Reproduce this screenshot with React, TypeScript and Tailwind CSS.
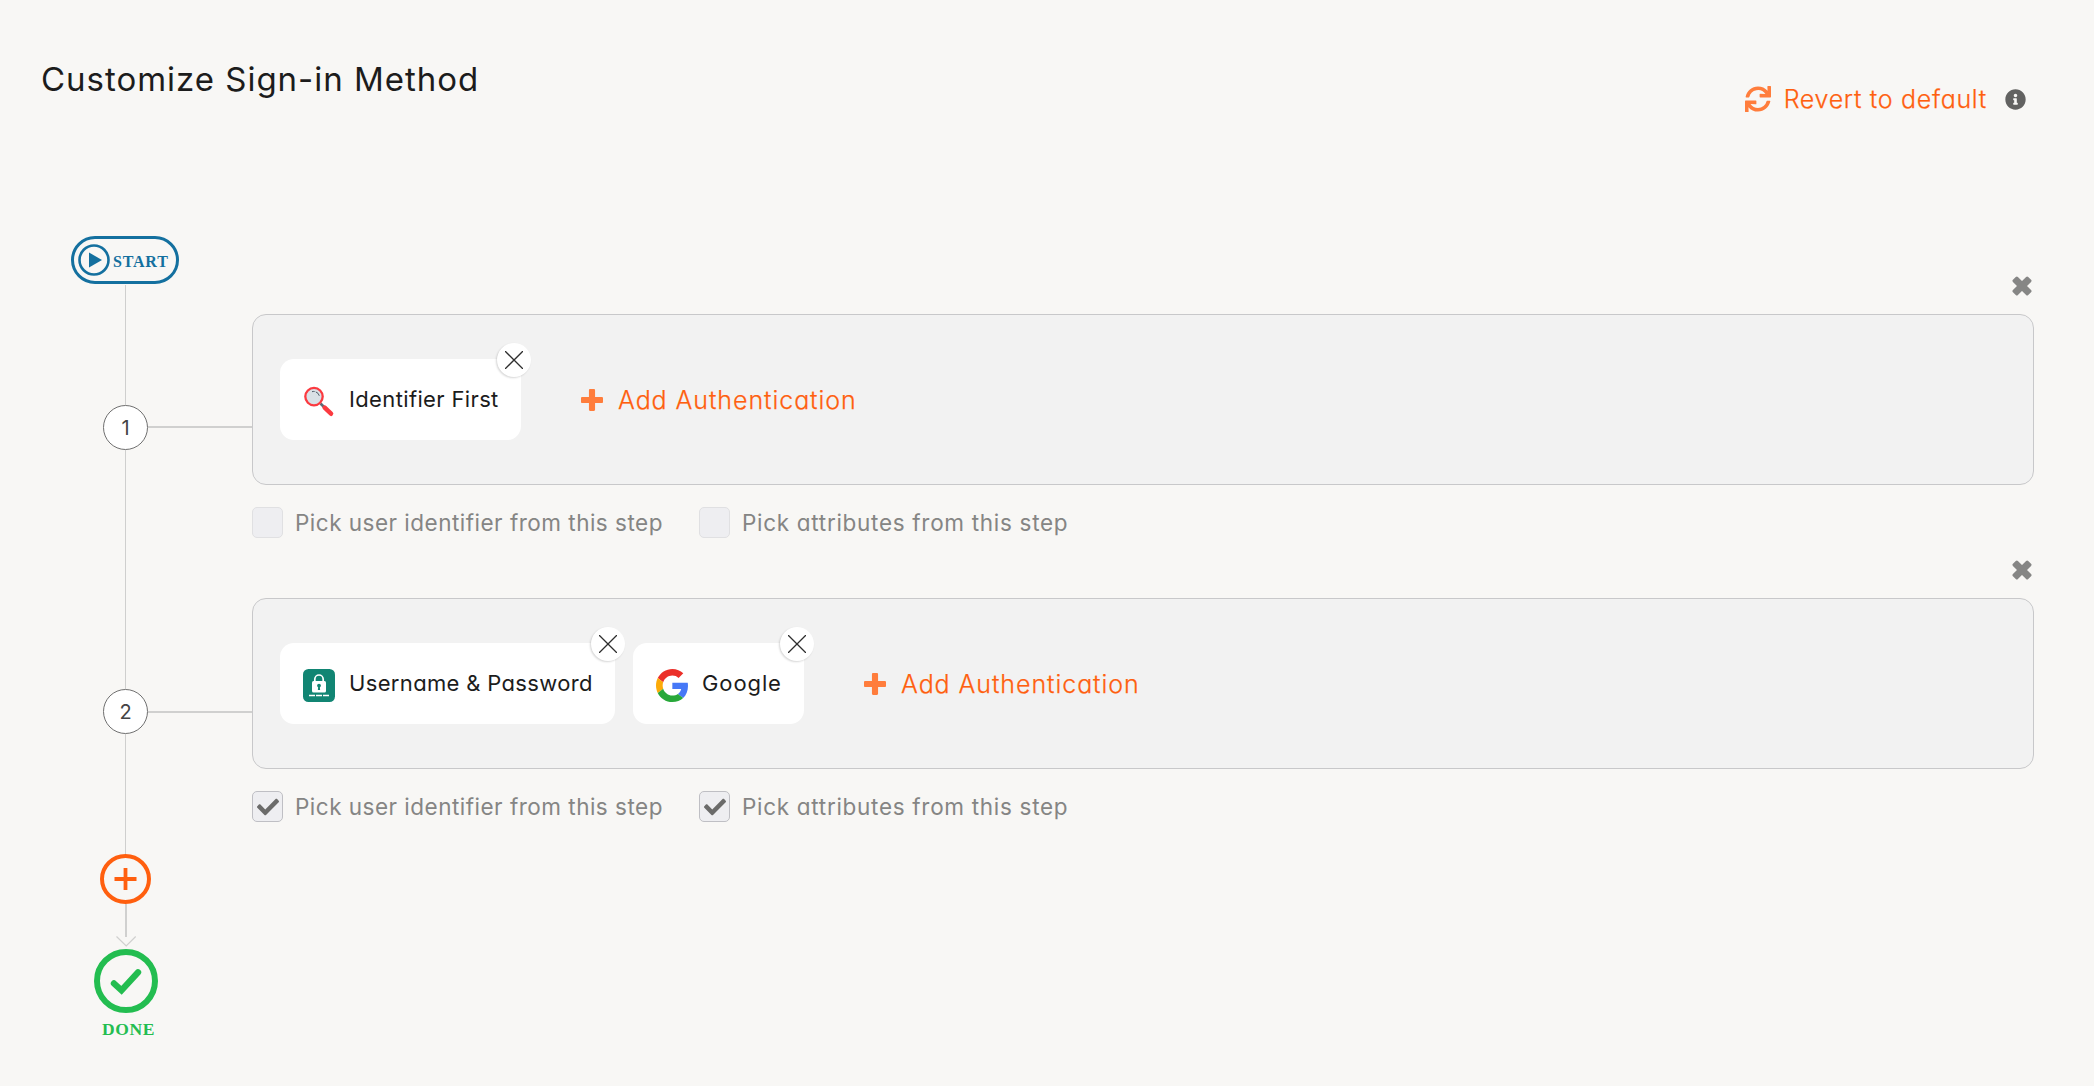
import type { ReactNode } from "react";
import { FaCheck, FaInfoCircle, FaSync } from "react-icons/fa";

function PlusIcon() {
  return (
    <svg viewBox="0 32 448 448" className="size-[22px] shrink-0 fill-[#ff7d3c]">
      <path d="M448 294.2v-76.4c0-13.3-10.7-24-24-24H286.2V56c0-13.3-10.7-24-24-24h-76.4c-13.3 0-24 10.7-24 24v137.8H24c-13.3 0-24 10.7-24 24v76.4c0 13.3 10.7 24 24 24h137.8V456c0 13.3 10.7 24 24 24h76.4c13.3 0 24-10.7 24-24V318.2H424c13.3 0 24-10.7 24-24z" />
    </svg>
  );
}

function RemoveStepIcon() {
  return (
    <svg viewBox="0 0 20 20" className="size-5 fill-[#868685]">
      <rect x="-0.8" y="6.5" width="21.6" height="7" rx="1.5" transform="rotate(45 10 10)" />
      <rect x="-0.8" y="6.5" width="21.6" height="7" rx="1.5" transform="rotate(-45 10 10)" />
    </svg>
  );
}

function MagnifierIcon() {
  return (
    <svg viewBox="0 0 32 32" className="size-8 shrink-0">
      <path d="M17.5 18.5l4 4" stroke="#5d6b76" strokeWidth="2.6" />
      <path d="M21.7 22.7l6.3 6" stroke="#fb3a40" strokeWidth="4.6" strokeLinecap="round" />
      <circle cx="11" cy="11.6" r="8.7" fill="#d9e0e6" stroke="#fb3a40" strokeWidth="2.3" />
      <path d="M9 6.7a5.6 5.6 0 0 1 2.6-.2M12.8 6.9a5.6 5.6 0 0 1 3.5 3.9" fill="none" stroke="#4f5b68" strokeWidth="1" />
    </svg>
  );
}

function LockIcon() {
  return (
    <svg viewBox="0 0 32 33" className="h-[33px] w-8 shrink-0">
      <rect width="32" height="33" rx="5.5" fill="#118573" />
      <path d="M11.8 13V10.2a4.2 4.2 0 0 1 8.4 0V13" fill="none" stroke="#fff" strokeWidth="1.7" />
      <rect x="9" y="12" width="14" height="11.5" rx="1.5" fill="#fff" />
      <circle cx="16" cy="16.6" r="1.9" fill="#118573" />
      <path d="M15.2 17h1.6l.3 4h-2.2z" fill="#118573" />
      <path d="M6 26.5h6M13 26.5h6M20 26.5h6" stroke="#fff" strokeWidth="1.6" />
    </svg>
  );
}

function GoogleIcon() {
  return (
    <svg viewBox="0 0 47 48" className="h-[33px] w-8 shrink-0" preserveAspectRatio="none">
      <path fill="#eb2f29" d="M24 9.5c3.54 0 6.71 1.22 9.21 3.6l6.85-6.85C35.9 2.38 30.47 0 24 0 14.62 0 6.51 5.38 2.56 13.22l7.98 6.19C12.43 13.72 17.74 9.5 24 9.5z" />
      <path fill="#4678f7" d="M46.98 24.55c0-1.57-.15-3.09-.38-4.55H24v9.02h12.94c-.58 2.96-2.26 5.48-4.78 7.18l7.73 6c4.51-4.18 7.09-10.36 7.09-17.65z" />
      <path fill="#fcab09" d="M10.53 28.59c-.48-1.45-.76-2.99-.76-4.59s.27-3.14.76-4.59l-7.98-6.19C.92 16.46 0 20.12 0 24c0 3.88.92 7.54 2.56 10.78l7.97-6.19z" />
      <path fill="#28a83a" d="M24 48c6.48 0 11.93-2.13 15.89-5.81l-7.73-6c-2.15 1.45-4.92 2.3-8.16 2.3-6.26 0-11.57-4.22-13.47-9.91l-7.98 6.19C6.51 42.62 14.62 48 24 48z" />
    </svg>
  );
}

function Chip({ icon, width, children }: { icon: ReactNode; width: string; children: ReactNode }) {
  return (
    <div className={`relative flex h-[81px] items-center rounded-[14px] bg-white pl-[23px] text-[22px] text-[#1c1c1c] ${width}`}>
      <span className="mr-[14px] flex pt-1">{icon}</span>
      <span className="pt-px">{children}</span>
      <button className="absolute -top-4 -right-2.5 flex size-[34px] items-center justify-center rounded-full bg-white shadow-[-1px_1px_2px_rgba(0,0,0,0.16)]">
        <svg viewBox="0 0 18 18" className="size-[18px]" stroke="#2e2e2e" strokeWidth="1.3">
          <path d="M0 0l18 18M18 0L0 18" />
        </svg>
      </button>
    </div>
  );
}

function Checkbox({ checked, children }: { checked: boolean; children: ReactNode }) {
  return (
    <label className="flex items-center gap-3 text-[22.5px] text-[#858584]">
      <span
        className={
          checked
            ? "flex size-[31px] items-center justify-center rounded-[5px] border border-[#bfbfc4] bg-[#eeeef1]"
            : "size-[31px] rounded-[5px] border border-[#e0e0e2] bg-[#eeeef1]"
        }
      >
        {checked && <FaCheck className="size-[22px] text-[#6b6b6a]" />}
      </span>
      {children}
    </label>
  );
}

function Step({ checked, children }: { checked: boolean; children: ReactNode }) {
  return (
    <section className="flex h-[284px] flex-col">
      <button className="mr-0.5 flex h-[38px] items-start self-end">
        <RemoveStepIcon />
      </button>
      <div className="flex h-[171px] items-center rounded-[14px] border border-[#c8c8ca] bg-[#f2f2f2] pb-[1px] pl-[27px]">
        <div className="flex gap-[18px]">{children}</div>
        <button className="ml-[60px] flex items-center gap-[15px] pt-0.5 text-[25px] font-light text-[#ff5f0f] [-webkit-text-stroke:0.25px_#ff5f0f]">
          <PlusIcon />
          <span className="pt-0.5 tracking-[0.93px]">Add Authentication</span>
        </button>
      </div>
      <div className="mt-[21px] flex">
        <div className="w-[447px]">
          <Checkbox checked={checked}>
            <span className="tracking-[0.49px]">Pick user identifier from this step</span>
          </Checkbox>
        </div>
        <Checkbox checked={checked}>
          <span className="tracking-[0.7px]">Pick attributes from this step</span>
        </Checkbox>
      </div>
    </section>
  );
}

function StepMarker({ n, connector }: { n: number; connector: string }) {
  return (
    <div className="ml-[103px] flex items-center">
      <span className="flex size-[45px] items-center justify-center rounded-full border border-[#6f6f6f] bg-white text-[20px] text-[#444]">
        {n}
      </span>
      <span className={`h-0.5 flex-1 bg-[#d0d0cf] ${connector}`} />
    </div>
  );
}

export default function App() {
  return (
    <main className="min-h-screen bg-[#f8f7f5] font-['Inter',sans-serif] [font-feature-settings:'cv11'] whitespace-nowrap">
      <header className="flex h-[236px] items-start justify-between pr-[68px] pl-[41px]">
        <h1 className="pt-[59px] text-[33px] leading-10 tracking-[0.98px] text-[#1c1c1c]">Customize Sign-in Method</h1>
        <div className="flex items-center pt-[83px]">
          <FaSync className="mr-[13px] size-[26px] text-[#ff7d3c]" />
          <button className="text-[25px] leading-8 font-light tracking-[0.7px] text-[#ff5f0f] [-webkit-text-stroke:0.25px_#ff5f0f]">Revert to default</button>
          <FaInfoCircle className="ml-[18px] size-[21px] text-[#626261]" />
        </div>
      </header>

      <div className="flex">
        <aside className="flex w-[252px] flex-col">
          <div className="ml-[71px] flex h-12 w-[108px] items-center rounded-full border-[3px] border-[#14709f] pl-1 text-[#14709f]">
            <svg viewBox="0 0 32 32" className="size-8 shrink-0">
              <circle cx="16" cy="16" r="14.5" fill="none" stroke="currentColor" strokeWidth="2.6" />
              <path d="M11 8.5l13 7.5-13 7.5z" fill="currentColor" />
            </svg>
            <span className="ml-[3px] pt-1 font-['Liberation_Serif',serif] text-[16px] leading-5 font-bold tracking-[0.8px]">START</span>
          </div>
          <span className="mt-px ml-[125px] h-[120px] w-px bg-[#cfcfce]" />
          <StepMarker n={1} connector="-mt-px" />
          <span className="ml-[125px] h-[239px] w-px bg-[#cfcfce]" />
          <StepMarker n={2} connector="mt-px" />
          <span className="ml-[125px] h-[120px] w-px bg-[#cfcfce]" />
          <button className="ml-[100px] w-[51px]">
            <svg viewBox="0 0 51 50" className="h-[50px] w-[51px]" fill="none" stroke="#ff5f0f">
              <ellipse cx="25.5" cy="25" rx="23.5" ry="23" strokeWidth="4" />
              <path d="M14.5 25h22M25.5 14v22" strokeWidth="3.8" />
            </svg>
          </button>
          <svg viewBox="0 0 22 45" className="ml-[115px] h-[45px] w-[22px]" fill="none" stroke="#d0d0cf">
            <path d="M11 0v33" strokeWidth="2" />
            <path d="M1.5 32.5l9.7 9.5 9.5-9.5" strokeWidth="1.2" />
          </svg>
          <svg viewBox="0 0 64 64" className="ml-[94px] size-16" fill="none" stroke="#23bd50">
            <circle cx="32" cy="32" r="29" strokeWidth="6" />
            <path d="M20 34.5l7.5 6.8L44 23.3" strokeWidth="6.4" strokeLinecap="round" />
          </svg>
          <span className="mt-[6px] ml-[102px] font-['Liberation_Serif',serif] text-[17.5px] leading-5 font-bold tracking-[0.6px] text-[#23bd50]">DONE</span>
        </aside>

        <div className="mt-10 mr-[60px] flex-1">
          <Step checked={false}>
            <Chip icon={<MagnifierIcon />} width="w-[241px]">
              <span className="tracking-[0.36px]">Identifier First</span>
            </Chip>
          </Step>
          <Step checked={true}>
            <Chip icon={<LockIcon />} width="w-[335px]">
              <span className="tracking-[0.34px]">Username &amp; Password</span>
            </Chip>
            <Chip icon={<GoogleIcon />} width="w-[171px]">
              <span className="tracking-[0.9px]">Google</span>
            </Chip>
          </Step>
        </div>
      </div>
    </main>
  );
}
